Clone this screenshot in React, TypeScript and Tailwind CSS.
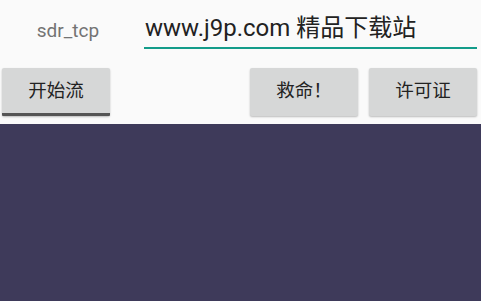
export default function App() {
  const font = { fontFamily: 'Roboto, "Noto Sans CJK SC", sans-serif' }
  return (
    <div className="w-[481px] h-[301px] flex flex-col bg-[#fafafa]" style={font}>
      <div className="h-[60px] flex items-start">
        <div className="w-[136px] pt-[19px] text-center text-[19px] text-[#737373] leading-[24px]">
          sdr_tcp
        </div>
        <div className="ml-[8px] w-[333px] pt-[12px]">
          <div className="text-[24px] leading-[32px] text-[#222] pl-[1px] whitespace-nowrap">
            www.j9p.com 精品下载站
          </div>
          <div className="h-[2px] mt-[3px] bg-[#139c8a]" />
        </div>
      </div>
      <div className="flex items-start pt-[8px] h-[64px]">
        <button className="ml-[2px] w-[108px] h-[48px] flex flex-col bg-[#d6d7d7] rounded-[2px] shadow-[0_1px_2px_rgba(0,0,0,0.25)]">
          <span className="flex-1 flex items-center justify-center text-[18.5px] text-[#222] pt-[2px]">开始流</span>
          <span className="h-[3px] bg-[#555] rounded-b-[1px]" />
        </button>
        <div className="flex-1" />
        <button className="w-[108px] h-[48px] flex items-center justify-center bg-[#d6d7d7] rounded-[2px] shadow-[0_1px_2px_rgba(0,0,0,0.25)] text-[18.5px] text-[#222]">
          救命！
        </button>
        <button className="ml-[11px] mr-[4px] w-[108px] h-[48px] flex items-center justify-center bg-[#d6d7d7] rounded-[2px] shadow-[0_1px_2px_rgba(0,0,0,0.25)] text-[18.5px] text-[#222]">
          许可证
        </button>
      </div>
      <div className="flex-1 bg-[#3e3a5a]" />
    </div>
  )
}
